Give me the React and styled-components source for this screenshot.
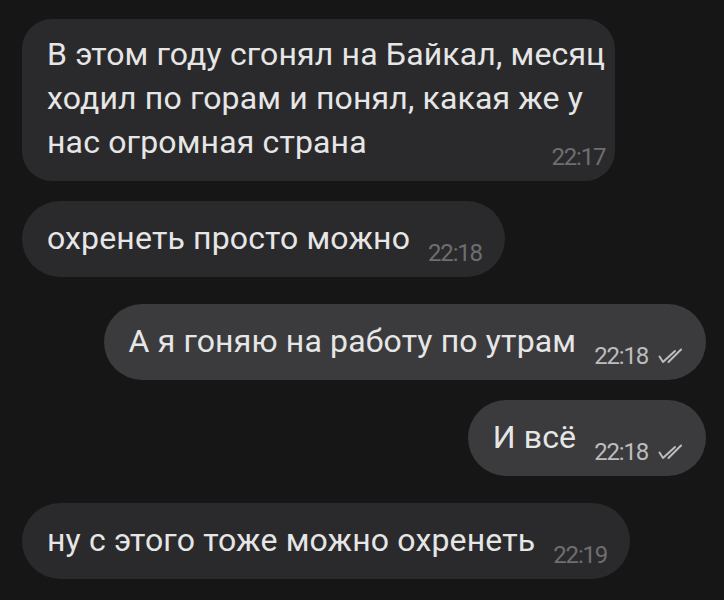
import React from 'react';
import styled, { createGlobalStyle } from 'styled-components';

const GlobalStyle = createGlobalStyle`
  html, body {
    margin: 0;
    padding: 0;
    background: #161616;
  }
  body {
    font-family: Roboto, "Noto Sans", "Liberation Sans", sans-serif;
    -webkit-font-smoothing: antialiased;
  }
`;

const Chat = styled.div`
  display: flex;
  flex-direction: column;
  padding: 19px 18px 20px 22px;
  background: #161616;
  min-height: 600px;
  box-sizing: border-box;
`;

const Row = styled.div`
  display: flex;
  justify-content: ${(p) => (p.out ? 'flex-end' : 'flex-start')};
  margin-top: ${(p) => p.gap || 0}px;
`;

const Bubble = styled.div`
  display: flex;
  flex-direction: column;
  box-sizing: border-box;
  background: ${(p) => (p.out ? '#3b3b3d' : '#2a2a2c')};
  border-radius: ${(p) => (p.multi ? '30px' : '38px')};
  padding: ${(p) => (p.multi ? '13px 10px 12px 25px' : '15px 23px 12px 25px')};
`;

const Line = styled.div`
  color: #e6e6e6;
  font-size: 32px;
  line-height: 44px;
  letter-spacing: 0.15px;
  white-space: nowrap;
`;

const LastRow = styled.div`
  display: flex;
  align-items: flex-end;
  justify-content: space-between;

  & > ${Line} {
    margin-bottom: 5px;
  }
`;

const Meta = styled.div`
  display: flex;
  align-items: center;
  gap: 10px;
  margin-left: 18px;
  font-size: 24px;
  line-height: 24px;
  letter-spacing: -1.2px;
  color: ${(p) => (p.out ? '#bdbdbd' : '#6e6e70')};
  white-space: nowrap;
`;

const Checks = () => (
  <svg width="25" height="16" viewBox="0 0 25 16" fill="none">
    <path d="M1.5 8.5 L5 14 L17 3" stroke="#bdbdbd" strokeWidth="2" strokeLinecap="round" strokeLinejoin="round" />
    <path d="M10.5 14 L23 1.5" stroke="#bdbdbd" strokeWidth="2" strokeLinecap="round" />
  </svg>
);

const messages = [
  {
    lines: ['В этом году сгонял на Байкал, месяц', 'ходил по горам и понял, какая же у', 'нас огромная страна'],
    time: '22:17',
  },
  { lines: ['охренеть просто можно'], time: '22:18', gap: 20 },
  { lines: ['А я гоняю на работу по утрам'], time: '22:18', out: true, gap: 27 },
  { lines: ['И всё'], time: '22:18', out: true, gap: 20 },
  { lines: ['ну с этого тоже можно охренеть'], time: '22:19', gap: 27 },
];

export default function App() {
  return (
    <>
      <GlobalStyle />
      <Chat>
        {messages.map((m, i) => {
          const head = m.lines.slice(0, -1);
          const last = m.lines[m.lines.length - 1];
          return (
            <Row key={i} out={m.out} gap={m.gap}>
              <Bubble out={m.out} multi={head.length > 0}>
                {head.map((l, j) => (
                  <Line key={j}>{l}</Line>
                ))}
                <LastRow>
                  <Line>{last}</Line>
                  <Meta out={m.out}>
                    <span>{m.time}</span>
                    {m.out && <Checks />}
                  </Meta>
                </LastRow>
              </Bubble>
            </Row>
          );
        })}
      </Chat>
    </>
  );
}
